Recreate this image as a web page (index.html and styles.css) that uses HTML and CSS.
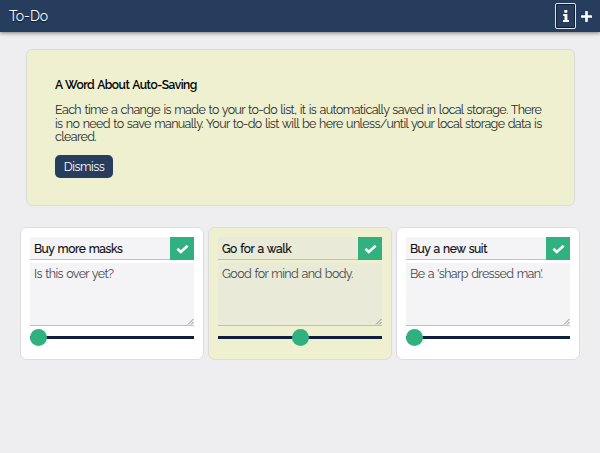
FILE: index.html
```html
<!DOCTYPE html>
<html lang="en">
<head>
<meta charset="utf-8">
<title>To-Do</title>
<link rel="stylesheet" href="styles.css">
</head>
<body>
<header class="bar">
  <h1 class="brand">To-Do</h1>
  <button class="tool focused" aria-label="Information"><svg width="6" height="12" viewBox="0 0 6 12"><path fill="#fff" d="M1.3 0h3v2.7h-3zM.2 4h4.2v6H6v2H0v-2h1.5V6H.2z"/></svg></button>
  <button class="tool add" aria-label="Add"><svg width="11" height="11" viewBox="0 0 11 11"><path d="M5.5 1v9M1 5.5h9" stroke="#fff" stroke-width="2.6" stroke-linecap="round"/></svg></button>
</header>
<section class="notice">
  <h2 class="heading">A Word About Auto-Saving</h2>
  <p class="message">Each time a change is made to your to-do list, it is automatically saved in local storage. There<br>is no need to save manually. Your to-do list will be here unless/until your local storage data is<br>cleared.</p>
  <button class="dismiss">Dismiss</button>
</section>
<main class="cards">
  <article class="card">
    <div class="row"><div class="title">Buy more masks</div><button class="done" aria-label="Done"><svg width="13" height="10" viewBox="0 0 13 10"><path d="M1.4 4.8l3.4 3.1 6.8-6.2" fill="none" stroke="#fff" stroke-width="2.6"/></svg></button></div>
    <div class="note">Is this over yet?<svg class="grip" width="7" height="7" viewBox="0 0 7 7"><path d="M1 6.5l5.5-5.5M4 6.5l2.5-2.5" stroke="#777" stroke-width=".8"/></svg></div>
    <input class="slider" type="range" min="0" max="2" value="0" aria-label="Priority">
  </article>
  <article class="card tinted">
    <div class="row"><div class="title">Go for a walk</div><button class="done" aria-label="Done"><svg width="13" height="10" viewBox="0 0 13 10"><path d="M1.4 4.8l3.4 3.1 6.8-6.2" fill="none" stroke="#fff" stroke-width="2.6"/></svg></button></div>
    <div class="note">Good for mind and body.<svg class="grip" width="7" height="7" viewBox="0 0 7 7"><path d="M1 6.5l5.5-5.5M4 6.5l2.5-2.5" stroke="#777" stroke-width=".8"/></svg></div>
    <input class="slider" type="range" min="0" max="2" value="1" aria-label="Priority">
  </article>
  <article class="card">
    <div class="row"><div class="title">Buy a new suit</div><button class="done" aria-label="Done"><svg width="13" height="10" viewBox="0 0 13 10"><path d="M1.4 4.8l3.4 3.1 6.8-6.2" fill="none" stroke="#fff" stroke-width="2.6"/></svg></button></div>
    <div class="note">Be a 'sharp dressed man'.<svg class="grip" width="7" height="7" viewBox="0 0 7 7"><path d="M1 6.5l5.5-5.5M4 6.5l2.5-2.5" stroke="#777" stroke-width=".8"/></svg></div>
    <input class="slider" type="range" min="0" max="2" value="0" aria-label="Priority">
  </article>
</main>
</body>
</html>
```
FILE: styles.css
```css
* { box-sizing: border-box; }
body { margin: 0; height: 453px; overflow: hidden; background: #eeeef0; font-family: Raleway, Lato, sans-serif; font-size: 12.5px; letter-spacing: -.63px; word-spacing: .8px; color: #2c2e2c; }
button { padding: 0; border: 0; font-family: inherit; }
svg { display: block; }
.bar { display: flex; align-items: center; height: 32px; padding: 0 8px 0 9px; background: #273d5d; box-shadow: 0 1px 4px rgba(0, 0, 0, .5); }
.brand { margin: 0 auto 0 0; font-size: 14px; font-weight: 400; color: #fff; letter-spacing: -.1px; text-shadow: 0 1px 1px #0a182c; }
.tool { display: flex; align-items: center; justify-content: center; background: transparent; }
.focused { width: 21px; height: 26px; border: 1px solid #dfe4ea; border-radius: 2px; box-shadow: inset 0 0 0 1px #111d32; }
.add { width: 11px; height: 26px; margin-left: 5px; }
.notice { width: 549px; height: 157px; margin: 17px 0 0 26px; padding: 28px 28px 0; background: #eef0d0; border: 1px solid #dcdddb; border-radius: 6px; white-space: nowrap; }
.heading { margin: 0; font-size: 12px; line-height: 14px; font-weight: 600; letter-spacing: -.48px; color: #000; }
.message { margin: 11px 0 11px; line-height: 13.7px; }
.dismiss { display: block; width: 58px; height: 23px; background: #273d5d; color: #fff; border-radius: 5px; font-size: 12.5px; letter-spacing: -.5px; }
.cards { display: flex; gap: 4px; margin: 21px 0 0 20px; }
.card { width: 184px; height: 133px; padding: 9px; background: #fff; border: 1px solid #dcdcdf; border-radius: 7px; }
.tinted { background: #eef0d0; }
.row { display: flex; height: 23px; }
.title { flex: 1; padding: 1px 4px 0; line-height: 22px; background: #f4f4f6; border-bottom: 1px solid #bfc0c2; color: #101217; font-size: 12px; font-weight: 500; letter-spacing: -.45px; white-space: nowrap; -webkit-text-stroke: .15px #101217; }
.done { display: flex; align-items: center; justify-content: center; width: 24px; background: #32b180; }
.note { position: relative; height: 63px; margin-top: 3px; padding: 3px 4px; line-height: 15px; background: #f4f4f6; border-bottom: 1px solid #bfc0c2; color: #47494d; white-space: nowrap; }
.tinted .title, .tinted .note { background: #e9ebd8; }
.grip { position: absolute; right: 0; bottom: 0; }
.slider { display: block; appearance: none; width: 164px; height: 17px; margin: 3px 0 0; background: transparent; }
.slider::-webkit-slider-runnable-track { height: 3px; background: #0f1f40; }
.slider::-webkit-slider-thumb { appearance: none; width: 17px; height: 17px; margin-top: -7px; border-radius: 50%; background: #32b180; }
```
